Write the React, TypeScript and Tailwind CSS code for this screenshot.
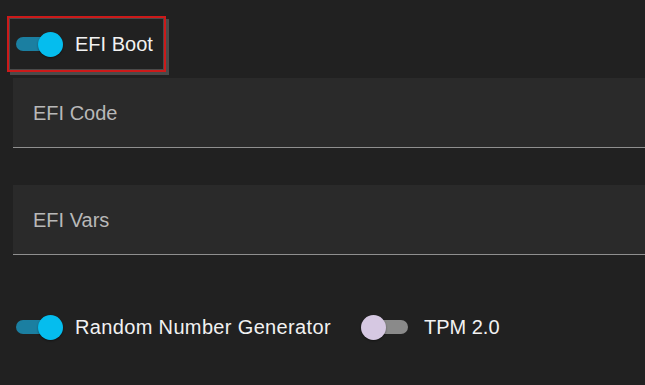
import React from "react";

function Switch({ on }: { on: boolean }) {
  return (
    <div className="relative w-[47px] h-[24px] shrink-0">
      {on ? (
        <>
          <div className="absolute left-0 top-[5px] w-[40px] h-[14px] rounded-full bg-[#1b7fa1]" />
          <div className="absolute right-0 top-0 w-[25px] h-[25px] rounded-full bg-[#05bdee] shadow-[0_1px_2px_rgba(0,0,0,0.4)]" />
        </>
      ) : (
        <>
          <div className="absolute right-0 top-[5px] w-[40px] h-[14px] rounded-full bg-[#8a8a8a]" />
          <div className="absolute left-0 top-0 w-[25px] h-[25px] rounded-full bg-[#d6c8e2] shadow-[0_1px_2px_rgba(0,0,0,0.4)]" />
        </>
      )}
    </div>
  );
}

function Field({ label }: { label: string }) {
  return (
    <div className="ml-[13px] h-[70px] bg-[#2a2a2a] border-b border-[#8f8f8f] flex items-center pl-[20px]">
      <span className="text-[20px] text-[#b8b8b8] leading-none">{label}</span>
    </div>
  );
}

export default function App() {
  return (
    <div
      className="w-[645px] h-[385px] bg-[#212121] overflow-hidden flex flex-col"
      style={{ fontFamily: '"Liberation Sans", Arial, sans-serif' }}
    >
      <div className="pt-[16px]">
        <div className="ml-[7px] w-[159px] h-[56px] border-2 border-[#cc1a1a] shadow-[3px_3px_0_#4a4a4a,inset_1px_1px_0_#4a4a4a,inset_-1px_-1px_0_#4a4a4a] flex items-center pl-[7px]">
          <Switch on={true} />
          <span className="ml-[12px] text-[20px] text-[#f2f2f2] leading-none">EFI Boot</span>
        </div>
      </div>
      <div className="mt-[6px]">
        <Field label="EFI Code" />
      </div>
      <div className="mt-[37px]">
        <Field label="EFI Vars" />
      </div>
      <div className="mt-[60px] flex items-center pl-[16px]">
        <Switch on={true} />
        <span className="ml-[12px] text-[20px] text-[#f2f2f2] leading-none tracking-[0.35px]">Random Number Generator</span>
        <div className="ml-[30px]">
          <Switch on={false} />
        </div>
        <span className="ml-[16px] text-[20px] text-[#f2f2f2] leading-none">TPM 2.0</span>
      </div>
    </div>
  );
}
